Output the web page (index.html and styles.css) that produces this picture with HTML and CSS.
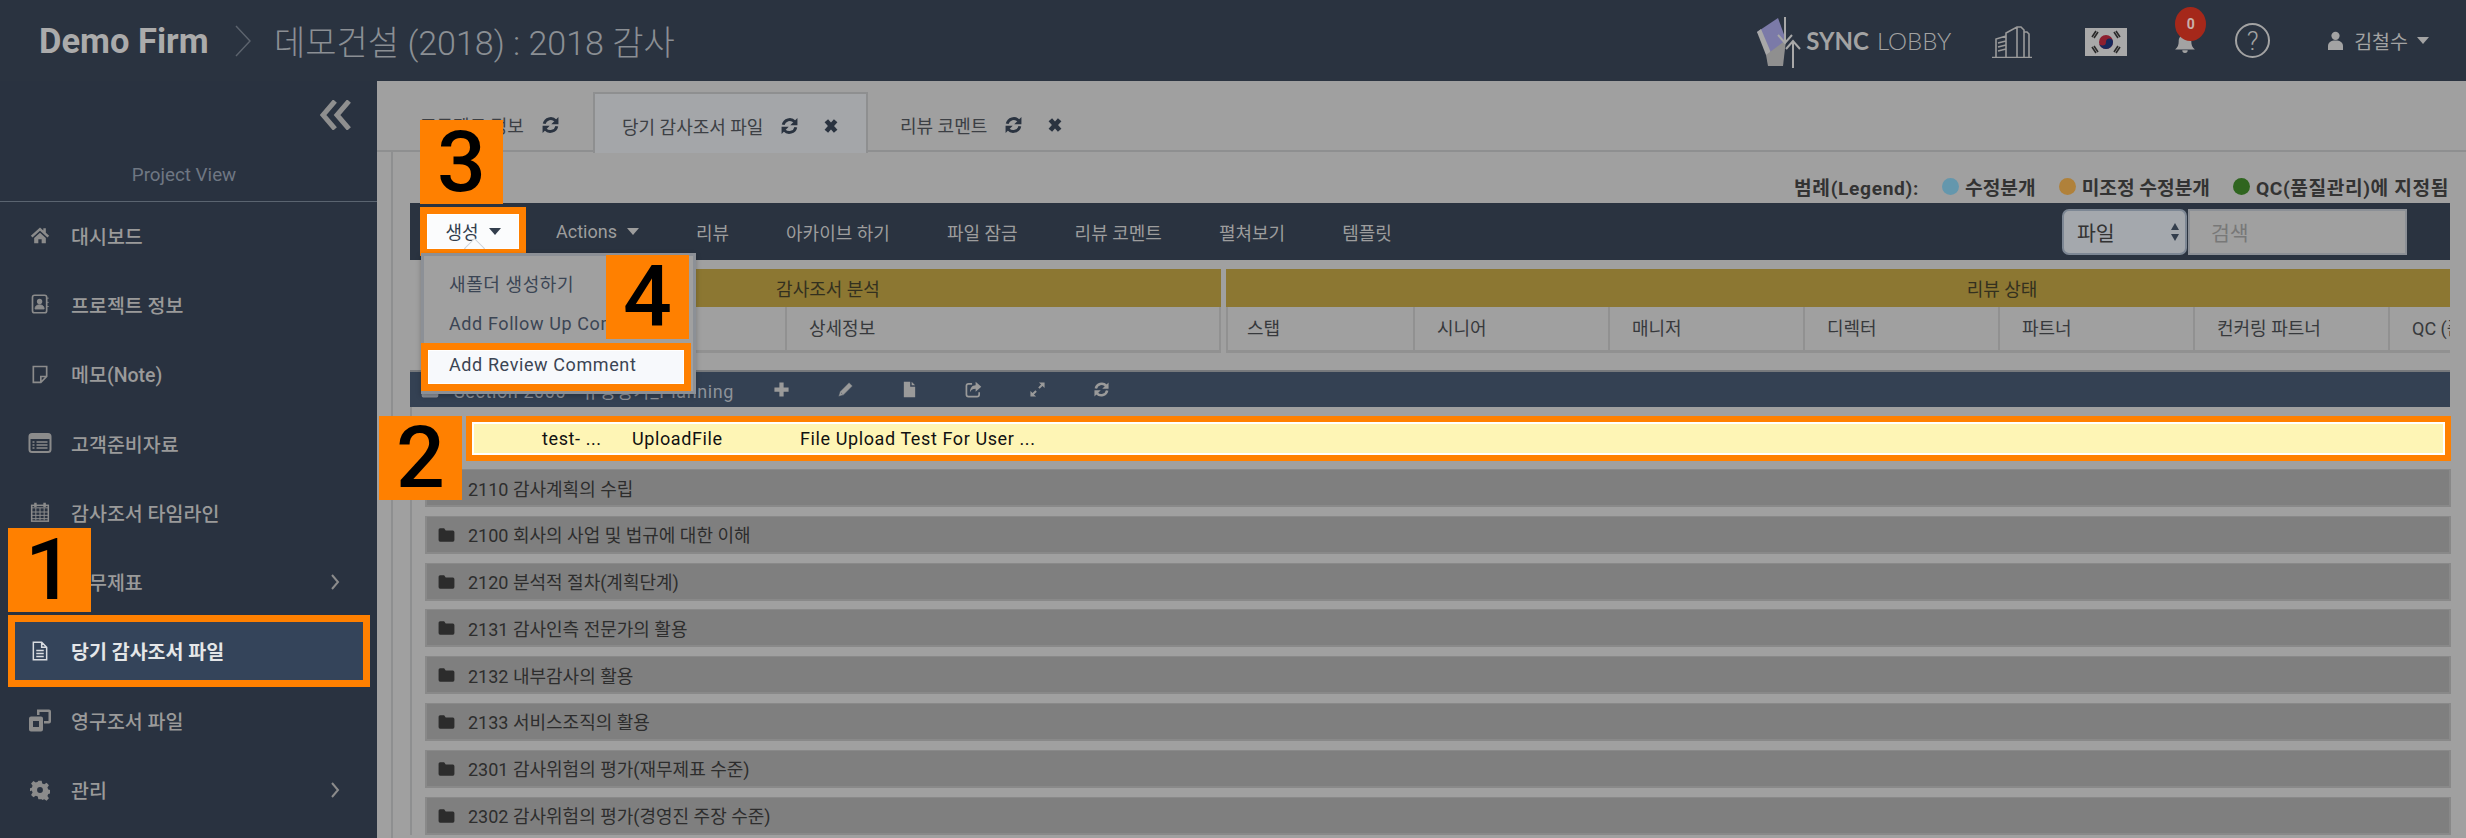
FILE: index.html
```html
<!DOCTYPE html>
<html lang="ko">
<head>
<meta charset="utf-8">
<title>Demo Firm</title>
<link rel="stylesheet" href="styles.css">
</head>
<body>
<svg class="defs" width="0" height="0">
  <symbol id="i-refresh" viewBox="0 0 24 24"><path d="M4 10.500A8.500 8.500 0 0 1 18.500 6.500" fill="none" stroke="currentColor" stroke-width="3.600"/><path d="M22 2v9h-9z" fill="currentColor"/><path d="M20 13.500A8.500 8.500 0 0 1 5.500 17.500" fill="none" stroke="currentColor" stroke-width="3.600"/><path d="M2 22v-9h9z" fill="currentColor"/></symbol>
  <symbol id="i-x" viewBox="0 0 24 24"><path d="M5 4L19 20M19 4L5 20" fill="none" stroke="currentColor" stroke-width="7"/></symbol>
  <symbol id="i-folder" viewBox="0 0 24 24"><path d="M2 6a2 2 0 0 1 2-2h5l2 3h9a2 2 0 0 1 2 2v10a2 2 0 0 1-2 2H4a2 2 0 0 1-2-2z" fill="currentColor"/></symbol>
  <symbol id="i-chev" viewBox="0 0 10 18"><path d="M2 2l6 7-6 7" fill="none" stroke="currentColor" stroke-width="2"/></symbol>
</svg>

<div class="app">
  <header class="header">
    <span class="brand">Demo Firm</span>
    <svg class="crumb" viewBox="0 0 16 32"><path d="M1 1l14 15L1 31" fill="none" stroke="currentColor" stroke-width="1.400"/></svg>
    <span class="title">데모건설 (2018) : 2018 감사</span>
    <div class="head-right">
      <div class="logo">
        <svg class="logo-mark" viewBox="0 0 50 52">
          <path d="M1 16L22 2l8 22-14 14z" fill="#7b7aa8"/>
          <path d="M1 16l9 23h6L5 13z" fill="#a8a8a8"/>
          <path d="M10 39l20-15-3 26H12z" fill="#8f8f8f"/>
          <path d="M29 1v26M22 19l7 8 7-8M37 52V26M30 33l7-8 7 8" fill="none" stroke="#a8a8a8" stroke-width="2"/>
        </svg>
        <span class="logo-a">SYNC</span><span class="logo-b">LOBBY</span>
      </div>
      <svg class="building" viewBox="0 0 40 32">
        <path d="M0 31.500h40M4 31V13l10-3M14 31V7L25 1h4l3 3v27M25 1v30M32 6h3l2 2v23M6 17l8-2M6 21l8-2M6 25l8-2" fill="none" stroke="#9a9a9a" stroke-width="1.600"/>
      </svg>
      <svg class="flag" viewBox="0 0 42 28">
        <rect width="42" height="28" fill="#a9a9a9"/>
        <circle cx="21" cy="14" r="7" fill="#8d1f2f"/>
        <path d="M14 14a3.500 3.500 0 0 0 7 0 3.500 3.500 0 0 1 7 0 7 7 0 0 1-14 0z" fill="#16295c"/>
        <path d="M7 9l4-6M9 10l4-6M29 4l4 6M31 3l4 6M7 19l4 6M9 18l4 6M29 24l4-6M31 25l4-6" stroke="#2a2a2a" stroke-width="1.600"/>
      </svg>
      <div class="bell">
        <svg viewBox="0 0 24 20"><path d="M12 0c5 0 7 3 7 7 0 4 1 7 4 9H1c3-2 4-5 4-9 0-4 2-7 7-7zM9 17h6a3 3 0 0 1-6 0z" fill="#a3a3a3"/></svg>
        <span class="badge">0</span>
      </div>
      <div class="help">?</div>
      <div class="user">
        <svg class="user-i" viewBox="0 0 16 20"><circle cx="8" cy="5" r="4.400" fill="#a3a3a3"/><path d="M0 20v-4c0-4 3-6 8-6s8 2 8 6v4z" fill="#a3a3a3"/></svg>
        <span>김철수</span>
        <span class="caret caret-head"></span>
      </div>
    </div>
  </header>

  <div class="main">
    <aside class="sidebar">
      <div class="side-top">
        <svg class="collapse" viewBox="0 0 32 30"><path d="M15 1L3 15l12 14M29 1L17 15l12 14" fill="none" stroke="#8f8f8f" stroke-width="5"/></svg>
        <div class="project-view">Project View</div>
      </div>
      <nav class="side-nav">
        <a class="side-item"><svg class="side-i" viewBox="0 0 24 24"><path d="M12 3L1 13l2 2 9-8 9 8 2-2-4-3.600V4h-3v2.700zM5 15.500V22h5v-5h4v5h5v-6.500l-7-6.300z" fill="currentColor"/></svg>대시보드</a>
        <a class="side-item"><svg class="side-i" viewBox="0 0 24 24"><rect x="3" y="1.500" width="17" height="21" rx="2.500" fill="none" stroke="currentColor" stroke-width="2"/><circle cx="11.500" cy="9" r="3.200" fill="currentColor"/><path d="M6 18c0-3.500 2.500-5 5.500-5s5.500 1.500 5.500 5zM20 5h2.500M20 10h2.500M20 15h2.500" fill="currentColor" stroke="currentColor"/></svg>프로젝트 정보</a>
        <a class="side-item"><svg class="side-i" viewBox="0 0 24 24"><path d="M4 3h16v12l-7 7H4zM20 15h-7v7" fill="none" stroke="currentColor" stroke-width="2"/></svg>메모(Note)</a>
        <a class="side-item"><svg class="side-i wide" viewBox="0 0 24 24"><rect x="1.500" y="3" width="21" height="18" rx="2.500" fill="none" stroke="currentColor" stroke-width="2"/><path d="M1.500 6h21" stroke="currentColor" stroke-width="4"/><path d="M4.500 11h2M8.500 11h11M4.500 14h2M8.500 14h11M4.500 17h2M8.500 17h11" stroke="currentColor" stroke-width="1.600"/></svg>고객준비자료</a>
        <a class="side-item"><svg class="side-i" viewBox="0 0 24 24"><rect x="2" y="4" width="20" height="19" fill="none" stroke="currentColor" stroke-width="1.800"/><path d="M2 7h20M2 12h20M2 16h20M2 20h20M7 7v15M12 7v15M17 7v15" stroke="currentColor" stroke-width="1.200"/><path d="M6.500 1v5M17.500 1v5" stroke="currentColor" stroke-width="3"/></svg>감사조서 타임라인</a>
        <a class="side-item"><span class="side-i"></span>재무제표<svg class="side-chev" viewBox="0 0 10 18"><use href="#i-chev"/></svg></a>
        <a class="side-item active"><svg class="side-i" viewBox="0 0 24 24"><path d="M4 1.500h10l6 6v15H4zM14 1.500v6h6M7.500 11.500h9M7.500 15h9M7.500 18.500h9" fill="none" stroke="currentColor" stroke-width="1.800"/></svg>당기 감사조서 파일</a>
        <a class="side-item"><svg class="side-i wide" viewBox="0 0 24 24"><path d="M1 10.500a2 2 0 0 1 2-2h10a2 2 0 0 1 2 2v11a2 2 0 0 1-2 2H3a2 2 0 0 1-2-2z" fill="currentColor"/><rect x="5" y="13" width="6" height="6" fill="#293240"/><path d="M9 1.500h12a2 2 0 0 1 2 2v10a2 2 0 0 1-2 2h-5V13h4.500V4H11.500v3H9z" fill="currentColor"/></svg>영구조서 파일</a>
        <a class="side-item"><svg class="side-i" viewBox="0 0 24 24"><path d="M10 1h4l.7 3.200 2.400 1 2.800-1.800 2.800 2.800-1.800 2.800 1 2.400 3.100.7v4l-3.100.7-1 2.400 1.800 2.800-2.800 2.800-2.800-1.800-2.400 1L14 23h-4l-.7-3.100-2.400-1-2.800 1.800-2.800-2.800 1.800-2.800-1-2.400L-1 14v-4l3.100-.7 1-2.400L1.300 4.100 4.100 1.300l2.800 1.800 2.400-1zM12 8.500a3.500 3.500 0 1 0 0 7 3.500 3.500 0 0 0 0-7z" fill="currentColor" fill-rule="evenodd"/></svg>관리<svg class="side-chev" viewBox="0 0 10 18"><use href="#i-chev"/></svg></a>
      </nav>
    </aside>

    <main class="content">
      <div class="tabs">
        <div class="tab tab-a">프로젝트 정보<svg class="ti"><use href="#i-refresh"/></svg></div>
        <div class="tab tab-b">당기 감사조서 파일<svg class="ti"><use href="#i-refresh"/></svg><svg class="tx"><use href="#i-x"/></svg></div>
        <div class="tab tab-c">리뷰 코멘트<svg class="ti"><use href="#i-refresh"/></svg><svg class="tx"><use href="#i-x"/></svg></div>
      </div>

      <section class="panel">
        <div class="legend">
          <span class="lg-label">범례(Legend):</span>
          <span class="lg"><i class="dot d-blue"></i>수정분개</span>
          <span class="lg"><i class="dot d-amber"></i>미조정 수정분개</span>
          <span class="lg lg-qc"><i class="dot d-green"></i>QC(품질관리)에 지정됨</span>
        </div>

        <div class="toolbar">
          <div class="create-btn">생성<span class="caret caret-dark"></span></div>
          <div class="tools">
            <span class="tool">Actions<span class="caret caret-tool"></span></span>
            <span class="tool">리뷰</span>
            <span class="tool">아카이브 하기</span>
            <span class="tool">파일 잠금</span>
            <span class="tool">리뷰 코멘트</span>
            <span class="tool">펼쳐보기</span>
            <span class="tool">템플릿</span>
          </div>
          <div class="search">
            <div class="select">파일<span class="updown"><i></i><i></i></span></div>
            <div class="input">검색</div>
          </div>
        </div>

        <div class="table-head">
          <div class="group g-left">
            <div class="gold gold-left">감사조서 분석</div>
            <div class="cols"><div class="col c-a"></div><div class="col c-b">상세정보</div></div>
          </div>
          <div class="group g-right">
            <div class="gold gold-right">리뷰 상태</div>
            <div class="cols">
              <div class="col c-r">스탭</div><div class="col c-r">시니어</div><div class="col c-r">매니저</div><div class="col c-r">디렉터</div><div class="col c-r">파트너</div><div class="col c-r">컨커링 파트너</div><div class="col c-r">QC (품질관리)</div>
            </div>
          </div>
        </div>

        <div class="section-bar">
          <svg class="sec-folder"><use href="#i-folder"/></svg>
          <span class="sec-title">Section 2000 - 유형평가_Planning</span>
          <span class="sec-icons">
            <svg class="si" viewBox="0 0 24 24"><path d="M9 2h6v7h7v6h-7v7H9v-7H2V9h7z" fill="currentColor"/></svg>
            <svg class="si" viewBox="0 0 24 24"><path d="M17 2l5 5-13 13-7 2 2-7zM5.500 16.500l2 2" fill="currentColor" stroke="#344153" stroke-width=".8"/></svg>
            <svg class="si" viewBox="0 0 24 24"><path d="M4 1h9v7h7v15H4zM15 1l5 5h-5z" fill="currentColor"/></svg>
            <svg class="si" viewBox="0 0 24 24"><path d="M10 4H5a3 3 0 0 0-3 3v12a3 3 0 0 0 3 3h12a3 3 0 0 0 3-3v-3" fill="none" stroke="currentColor" stroke-width="2.400"/><path d="M15 1l8 7-8 7v-4c-4 0-6 1-8 5 0-6 3-10 8-10z" fill="currentColor"/></svg>
            <svg class="si" viewBox="0 0 24 24"><path d="M14 2h8v8l-3-3-4 4-2-2 4-4zM10 22H2v-8l3 3 4-4 2 2-4 4z" fill="currentColor"/></svg>
            <svg class="si" viewBox="0 0 24 24"><use href="#i-refresh"/></svg>
          </span>
        </div>

        <div class="tree">
          <div class="file-row"><span class="fc-name">test- ...</span><span class="fc-type">UploadFile</span><span class="fc-desc">File Upload Test For User ...</span></div>
          <div class="folder-row"><svg class="fi"><use href="#i-folder"/></svg>2110 감사계획의 수립</div>
          <div class="folder-row"><svg class="fi"><use href="#i-folder"/></svg>2100 회사의 사업 및 법규에 대한 이해</div>
          <div class="folder-row"><svg class="fi"><use href="#i-folder"/></svg>2120 분석적 절차(계획단계)</div>
          <div class="folder-row"><svg class="fi"><use href="#i-folder"/></svg>2131 감사인측 전문가의 활용</div>
          <div class="folder-row"><svg class="fi"><use href="#i-folder"/></svg>2132 내부감사의 활용</div>
          <div class="folder-row"><svg class="fi"><use href="#i-folder"/></svg>2133 서비스조직의 활용</div>
          <div class="folder-row"><svg class="fi"><use href="#i-folder"/></svg>2301 감사위험의 평가(재무제표 수준)</div>
          <div class="folder-row"><svg class="fi"><use href="#i-folder"/></svg>2302 감사위험의 평가(경영진 주장 수준)</div>
        </div>
      </section>
    </main>
  </div>

  <div class="menu">
    <div class="menu-item">새폴더 생성하기</div>
    <div class="menu-item">Add Follow Up Comment</div>
    <div class="menu-item menu-hot">Add Review Comment</div>
  </div>

  <div class="step s1">1</div>
  <div class="step s2">2</div>
  <div class="step s3">3</div>
  <div class="step s4">4</div>
</div>
</body>
</html>
```

FILE: styles.css
```css
* { box-sizing: border-box; }
html, body { margin: 0; padding: 0; height: 838px; overflow: hidden; }
body { font-family: Roboto, "Noto Sans CJK KR", sans-serif; font-size: 18px; color: #333; background: #a0a0a0; }
.defs { position: absolute; }
.app { position: relative; width: 2466px; height: 838px; display: flex; flex-direction: column; overflow: hidden; }

/* header */
.header { height: 81px; flex: none; background: #2a3340; display: flex; align-items: center; padding: 0 37px 0 39px; }
.brand { font-size: 34.500px; font-weight: 700; color: #ababab; width: 196px; white-space: nowrap; }
.crumb { width: 16px; height: 32px; color: #5d646e; flex: none; }
.title { font-size: 34px; font-weight: 300; color: #8b8f94; margin-left: 23px; }
.head-right { margin-left: auto; display: flex; align-items: center; height: 81px; }
.logo { display: flex; align-items: center; color: #a3a3a3; }
.logo-mark { width: 50px; height: 52px; margin-top: 2px; }
.logo-a { font-family: Lato, sans-serif; font-size: 24px; font-weight: 700; }
.logo-b { font-family: Lato, sans-serif; font-size: 24px; font-weight: 300; margin-left: 8px; }
.building { width: 40px; height: 32px; margin-left: 41px; margin-top: 2px; }
.flag { width: 42px; height: 28px; margin-left: 53px; margin-top: 2px; }
.bell { position: relative; width: 32px; height: 81px; margin-left: 47px; }
.bell svg { position: absolute; left: 0; top: 35px; width: 22px; height: 18px; }
.badge { position: absolute; left: 1px; top: 7px; width: 31px; height: 34px; border-radius: 50%; background: #a5281a; color: #c9b0ab; font-size: 14px; font-weight: 700; display: flex; align-items: center; justify-content: center; }
.help { width: 35px; height: 35px; border: 2px solid #a3a3a3; border-radius: 50%; margin-left: 29px; color: #a3a3a3; font-size: 26px; display: flex; align-items: center; justify-content: center; font-weight: 300; }
.user { display: flex; align-items: center; margin-left: 58px; color: #a3a3a3; font-size: 19.500px; }
.user-i { width: 15px; height: 19px; margin-right: 11px; }
.caret { display: inline-block; width: 0; height: 0; border-style: solid; border-width: 7px 6.500px 0; border-color: #a3a3a3 transparent transparent; }
.caret-head { margin-left: 9px; }
.caret-dark { border-color: #333e4d transparent transparent; margin-left: 10px; }
.caret-tool { border-color: #9d9d9d transparent transparent; margin-left: 10px; }

/* main */
.main { flex: 1; display: flex; min-height: 0; }
.sidebar { width: 377px; flex: none; background: #293240; }
.side-top { height: 121px; border-bottom: 1px solid #5a6470; position: relative; }
.collapse { position: absolute; left: 320px; top: 19px; width: 32px; height: 30px; }
.project-view { position: absolute; left: 0; right: 0; top: 83px; text-align: center; font-size: 18.800px; color: #6f7783; margin-right: 9px; }
.side-nav { margin-top: -1.500px; }
.side-item { height: 69.300px; display: flex; align-items: center; padding-left: 30px; color: #9a9a9a; font-size: 19.500px; font-weight: 500; }
.side-i { width: 20px; height: 24px; margin-right: 21px; flex: none; color: #8b8b8b; }
.side-i.wide { width: 24px; margin-left: -2px; margin-right: 19px; }
.side-chev { width: 10px; height: 18px; margin-left: auto; margin-right: 37px; color: #8b8b8b; }
.side-item.active { height: 71.300px; margin: -1px 7px -1px 8px; padding-left: 15px; background: #34445a; border: 7px solid #ff8000; color: #e4e6e8; font-weight: 700; }
.side-item.active .side-i { color: #d9dce0; }

/* tabs */
.content { flex: 1; min-width: 0; background: #a0a0a0; display: flex; flex-direction: column; }
.tabs { height: 71px; flex: none; padding: 12px 0 0 14px; display: flex; border-bottom: 2px solid #8e8f90; }
.tab { height: 59px; display: flex; align-items: center; color: #3c3f44; font-size: 18px; padding-top: 4px; }
.ti { width: 19px; height: 20px; margin-left: 17px; color: #2a3340; }
.tx { width: 16px; height: 18px; margin-left: 24px; color: #2a3340; }
.tab-a { width: 202px; padding-left: 29px; }
.tab-b { width: 275px; padding-left: 27px; background: #a4a6a9; border: 2px solid #8e8f90; border-bottom: 0; height: 61px; margin-top: -1px; }
.tab-c { padding-left: 32px; }

/* panel */
.panel { flex: 1; min-height: 0; margin-left: 14px; padding: 0 16px 0 17px; border-left: 2px solid #8e8f90; overflow: hidden; }
.legend { height: 51px; display: flex; justify-content: flex-end; align-items: center; font-weight: 700; color: #333; padding-top: 18px; font-size: 19.200px; margin-right: 1px; }
.lg-label { margin-right: 23px; letter-spacing: .65px; }
.lg { display: flex; align-items: center; margin-right: 23px; }
.lg-qc { margin-right: 0; letter-spacing: .6px; }
.dot { width: 17px; height: 17px; border-radius: 50%; margin-right: 6px; }
.d-blue { background: #6497ad; }
.d-amber { background: #b0813a; }
.d-green { background: #2f651f; }

/* toolbar */
.toolbar { height: 57px; background: #2a3340; display: flex; align-items: center; padding: 0 43px 0 10px; position: relative; }
.create-btn { width: 106px; height: 49px; margin-top: -1px; background: #fbfcfd; border: 7px solid #ff8000; box-shadow: inset 0 0 0 1px #fff; color: #333e4d; display: flex; align-items: center; justify-content: center; position: relative; overflow: hidden; }
.create-btn::after { content: ""; position: absolute; left: 40px; bottom: -7px; width: 13px; height: 13px; background: #fbfcfd; border: 1px solid #cdd2d8; transform: rotate(45deg); }
.tools { display: flex; gap: 57px; margin-left: 30px; color: #9d9d9d; }
.tool { display: flex; align-items: center; }
.search { margin-left: auto; display: flex; align-self: flex-start; margin-top: 6px; font-size: 20.500px; }
.select { width: 125px; height: 46px; background: #a4a8ad; border: 2px solid #7d8794; border-radius: 7px; display: flex; align-items: center; justify-content: space-between; padding: 0 6px 0 13px; color: #333; }
.updown { display: flex; flex-direction: column; gap: 4px; }
.updown i { width: 0; height: 0; border-style: solid; border-width: 0 4.500px 7px; border-color: transparent transparent #333e4d; }
.updown i + i { border-width: 7px 4.500px 0; border-color: #333e4d transparent transparent; }
.input { width: 219px; height: 46px; margin-left: 1px; background: #a0a0a0; border: 2px solid #8c9096; padding-left: 21px; display: flex; align-items: center; color: #787878; }

/* table head */
.table-head { display: flex; margin-top: 9px; gap: 5px; overflow: hidden; height: 84px; }
.group { flex: none; }
.g-left { width: 786px; margin-left: 25px; }
.g-right { width: 1552px; }
.gold { height: 38px; background: #8c7732; color: #33301f; display: flex; align-items: center; justify-content: center; }
.cols { display: flex; height: 46px; border-bottom: 3px solid #919191; border-left: 2px solid #919191; border-right: 2px solid #919191; }
.col { height: 100%; display: flex; align-items: center; color: #37393c; padding-left: 22px; border-right: 2px solid #919191; padding-bottom: 3px; }
.c-a { width: 350px; }
.c-b { flex: 1; border-right: 0; }
.c-r { width: 195px; flex: none; padding-left: 22px; }
.c-r:first-child { width: 187px; padding-left: 19px; }
.c-r:last-child { border-right: 0; white-space: nowrap; }

/* section bar */
.section-bar { height: 35px; margin-top: 19px; background: #344153; box-shadow: 0 -2px 0 #77797c; display: flex; align-items: center; color: #8d929a; position: relative; }
.sec-folder { width: 20px; height: 20px; margin-left: 10px; color: #8d929a; flex: none; }
.sec-title { margin-left: 14px; width: 319px; letter-spacing: .6px; white-space: nowrap; flex: none; }
.sec-icons { display: flex; gap: 47px; color: #9a9a9a; }
.si { width: 17px; height: 17px; }

/* tree */
.tree { border-left: 2px solid #8e8f90; padding: 9px 0 0 13px; margin-right: -1px; display: flex; flex-direction: column; }
.file-row { height: 45px; margin-left: 41px; border: 6px solid #ff8000; background: #fef5b5; box-shadow: inset 0 0 0 2px #fff; display: flex; align-items: center; color: #111; letter-spacing: .6px; flex: none; }
.fc-name { margin-left: 70px; width: 90px; }
.fc-type { width: 168px; }
.fc-desc { white-space: nowrap; }
.folder-row { height: 38px; flex: none; margin-top: 8.800px; background: #7f7f7f; border: 2px solid #898989; border-top-width: 1px; display: flex; align-items: center; color: #2d2d2d; padding-left: 10px; white-space: nowrap; }
.file-row + .folder-row { margin-top: 8px; }
.fi { width: 19px; height: 19px; margin-right: 12px; color: #2c2c2c; }

/* dropdown */
.menu { position: absolute; left: 421px; top: 253px; width: 275px; height: 141px; background: #a0a0a0; border: 3px solid #8c9096; box-shadow: 0 2px 5px rgba(0,0,0,.25); padding-top: 7px; color: #3b4554; letter-spacing: .6px; }
.menu-item { height: 40px; display: flex; align-items: center; padding-left: 25px; white-space: nowrap; overflow: hidden; }
.menu-hot { height: 48px; width: 270px; margin: 0 0 0 -3px; background: #f7f9fc; border: 7px solid #ff8000; padding: 0 0 5px 21px; box-shadow: inset 0 0 0 1px #fff; }

/* step callouts */
.step { position: absolute; width: 83px; height: 84px; background: #ff8000; color: #000; font-size: 86px; font-weight: 500; display: flex; align-items: center; justify-content: center; line-height: 1; }
.s1 { left: 8px; top: 528px; }
.s2 { left: 379px; top: 416px; }
.s3 { left: 420px; top: 120px; }
.s4 { left: 606px; top: 255px; }
```
